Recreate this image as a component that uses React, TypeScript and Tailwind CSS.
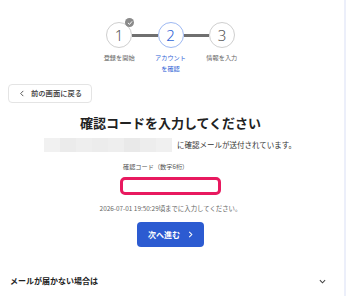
import React from "react";

const font = { fontFamily: '"Noto Sans CJK JP", "Noto Sans", sans-serif' };

function Circle({ n, active }: { n: string; active?: boolean }) {
  return (
    <div
      className={`relative w-[26px] h-[26px] rounded-full border flex items-center justify-center bg-white ${
        active ? "border-[#9db8f2] text-[#2f63d6]" : "border-[#cfcfcf] text-[#555]"
      }`}
    >
      <span className="text-[15px] leading-none font-light" style={{ fontFamily: '"Noto Sans", sans-serif' }}>{n}</span>
    </div>
  );
}

export default function App() {
  const shades = ["#f1f1f1", "#ebebeb", "#eeeeee", "#ececec", "#eeeeee", "#e9e9e9", "#ededed", "#f0f0f0"];
  return (
    <div className="w-[346px] h-[296px] flex bg-white overflow-hidden" style={font}>
      <div className="flex-1 flex flex-col">
        {/* Stepper */}
        <div className="pt-[22px] flex flex-col items-center pr-[3px]">
          <div className="w-[154px] px-[12.5px] flex items-center">
            <div className="relative">
              <Circle n="1" />
              <div className="absolute -top-[4px] -right-[2px] w-[9px] h-[9px] rounded-full bg-[#8a8a8a] flex items-center justify-center">
                <svg width="6" height="6" viewBox="0 0 10 10">
                  <path d="M2 5.2 L4.2 7.3 L8 2.8" stroke="white" strokeWidth="1.6" fill="none" strokeLinecap="round" strokeLinejoin="round" />
                </svg>
              </div>
            </div>
            <div className="flex-1 h-[3px] bg-[#6f6f6f]" />
            <Circle n="2" active />
            <div className="flex-1 h-[3px] bg-[#6f6f6f]" />
            <Circle n="3" />
          </div>
          <div className="w-[154px] flex mt-[4px] text-[6.2px] leading-[11px] text-center">
            <div className="w-1/3 text-[#666]">登録を開始</div>
            <div className="w-1/3 text-[#2f63d6]">
              アカウント
              <br />
              を確認
            </div>
            <div className="w-1/3 text-[#666]">情報を入力</div>
          </div>
        </div>

        {/* Back button */}
        <div className="mt-[10px] ml-[8px]">
          <button className="w-[84px] h-[19px] border border-[#e4e4e4] rounded-[4px] flex items-center pl-[10px] gap-[6px] bg-white text-[#333]">
            <svg width="6" height="7" viewBox="0 0 6 8">
              <path d="M4.5 1 L1.5 4 L4.5 7" stroke="#444" strokeWidth="1" fill="none" />
            </svg>
            <span className="text-[7.3px] font-medium leading-none">前の画面に戻る</span>
          </button>
        </div>

        {/* Title */}
        <h1 className="mt-[12px] text-center text-[13px] leading-[16px] font-bold text-[#222] pr-[3px]">
          確認コードを入力してください
        </h1>

        {/* Email line */}
        <div className="mt-[7px] flex items-center justify-center pr-[4px]">
          <div className="flex h-[14px] w-[128px]">
            {shades.map((c, i) => (
              <div key={i} className="flex-1 h-full" style={{ backgroundColor: c }} />
            ))}
          </div>
          <span className="ml-[5px] text-[7.5px] leading-[10px] text-[#333]">に確認メールが送付されています。</span>
        </div>

        {/* Form */}
        <div className="flex flex-col items-center mt-[11px] pr-[3px]">
          <div className="w-[101px]">
            <div className="text-[6.2px] leading-[8px] text-[#555] pl-[3px]">確認コード（数字6桁）</div>
            <div className="mt-[6px] h-[18px] w-[101px] border-[3px] border-[#e8195f] rounded-[5px] bg-white" />
          </div>
          <div className="mt-[10px] text-[6.4px] leading-[8px] text-[#666]">
            2026-07-01 19:50:29頃までに入力してください。
          </div>
          <button className="mt-[9px] w-[67px] h-[25px] rounded-[4px] bg-[#2c5bd1] text-white flex items-center justify-center gap-[8px]">
            <span className="text-[8px] font-bold leading-none">次へ進む</span>
            <svg width="5" height="7" viewBox="0 0 5 8">
              <path d="M1 1 L4 4 L1 7" stroke="white" strokeWidth="1.2" fill="none" />
            </svg>
          </button>
        </div>

        {/* Bottom accordion */}
        <div className="mt-[29px] flex items-center justify-between pl-[10px] pr-[18px]">
          <span className="text-[8px] leading-[10px] font-bold text-[#222]">メールが届かない場合は</span>
          <svg width="7" height="5" viewBox="0 0 8 5">
            <path d="M1 1 L4 4 L7 1" stroke="#444" strokeWidth="1.2" fill="none" />
          </svg>
        </div>
      </div>
      <div className="w-[2px] h-full bg-[#eceffa]" />
    </div>
  );
}
